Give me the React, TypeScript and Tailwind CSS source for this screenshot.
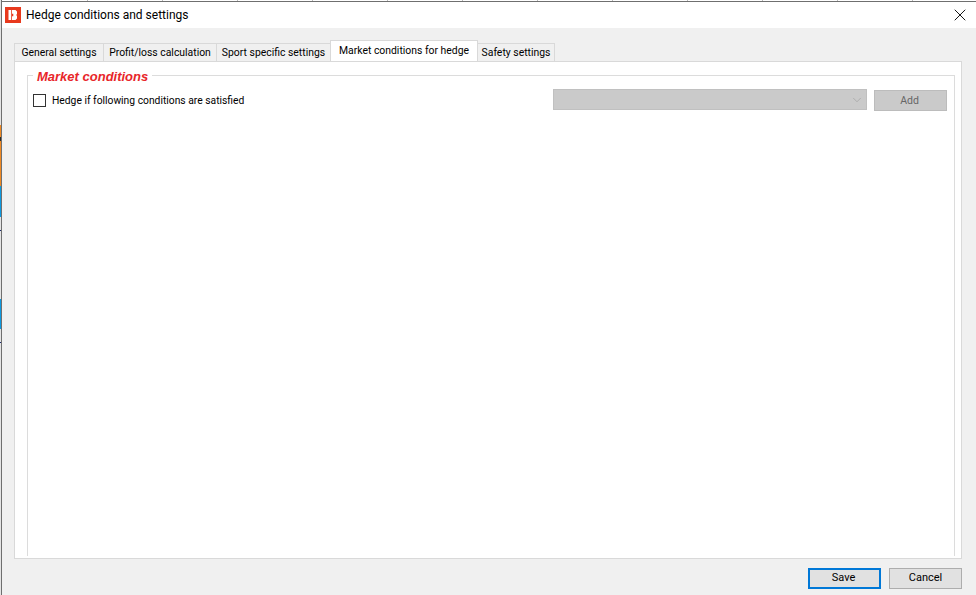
import { X, ChevronDown } from "lucide-react";

const tabs = [
    { label: "General settings", width: "w-[90px]" },
    { label: "Profit/loss calculation", width: "w-[114px]" },
    { label: "Sport specific settings", width: "w-[115px]" },
];

const App = () => {
    return (
        <div className="flex h-[595px] w-[976px] overflow-hidden bg-white font-['Roboto',sans-serif] text-[12px] text-black">
            {/* Sliver of the app behind the dialog */}
            <div className="flex w-[2px] flex-col border-r border-[#6f6f6f] bg-[#e4e4e4]">
                <div className="h-[125px]" />
                <div className="h-[12px] bg-[#f08a24]" />
                <div className="h-[4px] bg-[#2a2a2a]" />
                <div className="h-[45px] bg-[#f08a24]" />
                <div className="h-[31px] bg-[#0f9ae0]" />
                <div className="h-[13px]" />
                <div className="h-[1px] bg-[#1b2a6b]" />
                <div className="h-[68px]" />
                <div className="h-[30px] bg-[#0f9ae0]" />
                <div className="h-[13px]" />
                <div className="h-[1px] bg-[#1b2a6b]" />
            </div>

            <div className="flex flex-1 flex-col">
                <div className="h-[2px] border-b border-[#6f6f6f] bg-[repeating-linear-gradient(90deg,#ffffff_0,#ffffff_10px,#bbbbbb_10px,#bbbbbb_11px,#ffffff_11px,#ffffff_75px)]" />

                {/* Title bar */}
                <div className="flex h-[26px] items-center bg-white pl-[3px] pr-[6px]">
                    <div className="flex h-[16px] w-[16px] items-center justify-center bg-[#e8391d]">
                        <svg width="12" height="12" viewBox="0 0 12 12">
                            <path d="M1.5 1h2.7v10H1.5z" fill="white" />
                            <path d="M5 1h3.5L10 2.5v2.4L9.2 6l.8 1.1v2.4L8.500 11H5V7.300h1.300V4.700H5z" fill="white" />
                        </svg>
                    </div>
                    <span className="ml-[5px] text-[12px]">Hedge conditions and settings</span>
                    <X size={20} strokeWidth={1.1} className="ml-auto" />
                </div>

                {/* Dialog body */}
                <div className="flex flex-1 flex-col bg-[#f0f0f0] pl-[12px] pr-[14px]">
                    <div className="flex h-[33px] items-end">
                        {tabs.map((tab) => (
                            <div
                                key={tab.label}
                                className={`flex h-[18px] ${tab.width} -mr-px items-center justify-center whitespace-nowrap border border-b-0 border-[#d9d9d9] bg-[#f0f0f0] text-[10.4px]`}
                            >
                                {tab.label}
                            </div>
                        ))}
                        <div className="relative z-10 flex h-[21px] w-[148px] items-start justify-center whitespace-nowrap border border-b-0 border-[#d9d9d9] bg-white pt-[2px] text-[10.4px]">
                            Market conditions for hedge
                        </div>
                        <div className="-ml-px flex h-[18px] w-[78px] items-center justify-center whitespace-nowrap border border-b-0 border-[#d9d9d9] bg-[#f0f0f0] text-[10.4px]">
                            Safety settings
                        </div>
                    </div>

                    {/* Tab panel */}
                    <div className="h-[498px] border border-[#d9d9d9] bg-white pl-[12px] pr-[6px] pt-[3px]">
                        <fieldset className="h-[491px] border border-b-0 border-[#dcdcdc] pl-[5px] pr-[7px]">
                            <legend className="px-[4px] pt-[4px] font-['Liberation_Sans',sans-serif] text-[13px] leading-[16px] font-bold italic text-[#e8262a]">
                                Market conditions
                            </legend>
                            <div className="mt-[4px] flex items-start">
                                <div className="mt-[5px] h-[13px] w-[13px] border border-[#333333] bg-white" />
                                <span className="ml-[6px] mt-[4px] whitespace-nowrap text-[10.3px]">Hedge if following conditions are satisfied</span>
                                <div className="ml-auto flex h-[21px] w-[314px] items-center justify-end border border-[#c0c0c0] bg-[#cacaca] pr-[2px]">
                                    <ChevronDown size={14} strokeWidth={1} className="text-[#9a9a9a]" />
                                </div>
                                <div className="ml-[7px] mt-[1px] flex h-[21px] w-[73px] items-center justify-center border border-[#bcbcbc] bg-[#cacaca] pr-[2px] text-[10.5px] text-[#666666]">
                                    Add
                                </div>
                            </div>
                        </fieldset>
                    </div>

                    {/* Footer */}
                    <div className="flex flex-1 items-start justify-end pt-[9px]">
                        <button className="flex h-[21px] w-[73px] items-center justify-center border-2 border-[#0078d7] bg-[#e1e1e1] pb-[1px] pr-[2px] text-[11px]">
                            Save
                        </button>
                        <button className="ml-[8px] flex h-[21px] w-[73px] items-center justify-center border border-[#adadad] bg-[#e1e1e1] pb-[1px] text-[11px]">
                            Cancel
                        </button>
                    </div>
                </div>
            </div>
        </div>
    );
};

export default App;
